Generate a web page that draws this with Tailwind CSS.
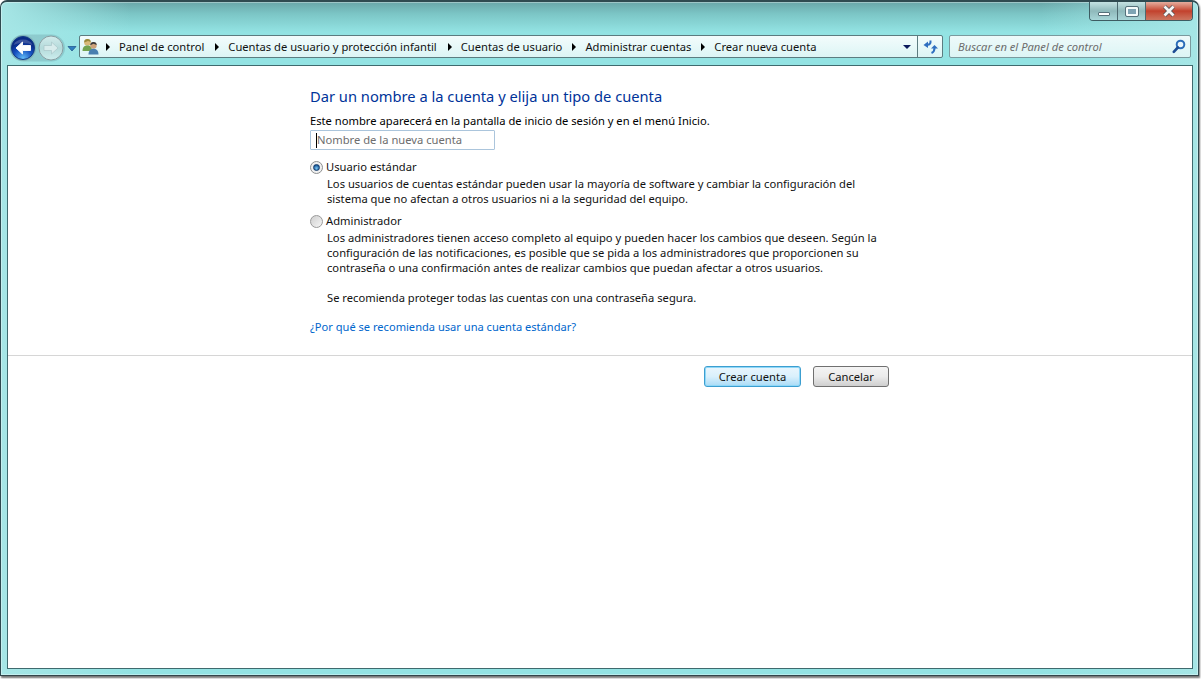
<!DOCTYPE html>
<html lang="es">
<head>
<meta charset="UTF-8" />
<title>Crear nueva cuenta</title>
<script src="https://cdn.jsdelivr.net/npm/@tailwindcss/browser@4"></script>
</head>
<body class="bg-white">
<div class="w-[1201px] h-[679px] overflow-hidden font-['Noto_Sans',sans-serif] text-[11.2px] text-[#1a1a1a]">
  <!-- ventana -->
  <div class="w-[1199px] h-[676px] flex flex-col rounded-t-[7px] border border-t-2 border-[#2f4a50] border-b-[#33454a] bg-[linear-gradient(90deg,#a6e6e6_0px,rgba(166,230,230,0)_130px,rgba(166,230,230,0)_1040px,#a6e6e6_1199px),linear-gradient(180deg,#6aa6a8_0px,#7cc6c6_12px,#93e3e3_30px,#93e3e3_100%)] shadow-[1px_2px_2px_rgba(0,0,0,0.55),inset_0_0_0_1px_rgba(255,255,255,0.35)]">
    <!-- botones de ventana -->
    <div class="flex justify-end pr-[5px] h-[20px] shrink-0">
      <div class="flex h-[19px] rounded-b-[4px] border border-t-0 border-[#3d5c62] overflow-hidden">
        <div class="w-[28px] flex items-center justify-center bg-gradient-to-b from-[#c4e2e2] via-[#8fb9bb] to-[#a8d6d8] border-r border-[#4c6a70]">
          <div class="w-[12px] h-[4px] mt-[6px] bg-white border border-[#56707a] rounded-[1px]"></div>
        </div>
        <div class="w-[28px] flex items-center justify-center bg-gradient-to-b from-[#c4e2e2] via-[#8fb9bb] to-[#a8d6d8] border-r border-[#4c6a70]">
          <div class="w-[12px] h-[9px] border-2 border-[#f4fbfb] bg-[#7fa4b4] outline outline-1 outline-[#56707a] rounded-[1px]"></div>
        </div>
        <div class="w-[46px] flex items-center justify-center bg-gradient-to-b from-[#e3ad9e] via-[#c2412d] to-[#cc7560]">
          <svg width="14" height="12" viewBox="0 0 14 12"><path d="M2.5 1.5 L11.5 10.5 M11.5 1.5 L2.5 10.5" stroke="#4b4f55" stroke-width="4.2"/><path d="M2.5 1.5 L11.5 10.5 M11.5 1.5 L2.5 10.5" stroke="#f6f6f6" stroke-width="2.8"/></svg>
        </div>
      </div>
    </div>
    <!-- barra de direcciones -->
    <div class="flex items-end h-[43px] shrink-0 pl-[9px] pb-[7px]">
      <div class="flex items-center w-[69px] h-[23px] shrink-0">
        <svg width="55" height="30" viewBox="0 0 55 30" class="shrink-0">
          <defs>
            <radialGradient id="azul" cx="50%" cy="95%" r="70%"><stop offset="0" stop-color="#63bdf8"/><stop offset="0.6" stop-color="#1550c0"/><stop offset="1" stop-color="#0a2a86"/></radialGradient>
            <linearGradient id="gris" x1="0" y1="0" x2="0" y2="1"><stop offset="0" stop-color="#d3ecec"/><stop offset="0.5" stop-color="#b4dada"/><stop offset="1" stop-color="#cdeeee"/></linearGradient>
          </defs>
          <rect x="0" y="2.5" width="55" height="27" rx="13.5" fill="#6a9ca2" opacity="0.35"/>
          <circle cx="13" cy="16" r="13" fill="#7aaab0" opacity="0.7"/>
          <circle cx="41" cy="16" r="12" fill="url(#gris)" stroke="#8a9fa3"/>
          <circle cx="13" cy="16" r="11.5" fill="url(#azul)" stroke="#123a86"/>
          <path d="M3.5 13 A10 8 0 0 1 22.5 13 A14 8 0 0 0 3.5 13 Z" fill="#ffffff" opacity="0.2"/>
          <path d="M6 16 L12.5 10 V13.5 H20.5 V18.5 H12.5 V22 Z" fill="#fff" stroke="#fff" stroke-width="0.9" stroke-linejoin="round"/>
          <path d="M48 16 L41.5 10 V13.5 H34 V18.5 H41.5 V22 Z" fill="#d8ecec" stroke="#a9c6c8" stroke-width="0.7"/>
        </svg>
        <svg width="10" height="6" viewBox="0 0 10 6" class="ml-[2px] mt-[4px] shrink-0"><path d="M1 0.5 H9 L5 5 Z" fill="#2f7fc0" stroke="#1c4f86" stroke-width="0.7"/></svg>
      </div>
      <div class="flex items-center w-[864px] h-[23px] shrink-0 rounded-[2px] border border-[#5c7c80] bg-gradient-to-b from-[#f3fcfc] to-[#dcf5f5]">
        <svg width="17" height="17" viewBox="0 0 17 17" class="ml-[2px] shrink-0">
          <circle cx="5.5" cy="4.5" r="3.3" fill="#d9b978"/>
          <path d="M2.2 4.5 A3.3 3.3 0 0 1 8.8 4 L6 3 Z" fill="#9a8a3a"/>
          <path d="M0.5 13 C0.5 8.5 3 7.5 5.5 7.5 C8 7.5 10 8.5 10 13 Z" fill="#72a34f"/>
          <circle cx="11.5" cy="7.5" r="3.2" fill="#cda27a"/>
          <path d="M8.3 7.3 A3.2 3.2 0 0 1 14.7 7 L11.5 5.8 Z" fill="#3a3a3a"/>
          <path d="M6.5 16.5 C6.5 12 9 10.7 11.5 10.7 C14 10.7 16.5 12 16.5 16.5 Z" fill="#4a7fb0"/>
        </svg>
        <div class="flex-1 flex items-center text-[#111] whitespace-nowrap pl-[7px] pt-[1px]">
          <span class="w-0 h-0 border-y-[4px] border-y-transparent border-l-[4px] border-l-black mr-[9px]"></span>
          <span>Panel de control</span>
          <span class="w-0 h-0 border-y-[4px] border-y-transparent border-l-[4px] border-l-black ml-[11px] mr-[9px]"></span>
          <span>Cuentas de usuario y protección infantil</span>
          <span class="w-0 h-0 border-y-[4px] border-y-transparent border-l-[4px] border-l-black ml-[11px] mr-[9px]"></span>
          <span>Cuentas de usuario</span>
          <span class="w-0 h-0 border-y-[4px] border-y-transparent border-l-[4px] border-l-black ml-[10px] mr-[9px]"></span>
          <span>Administrar cuentas</span>
          <span class="w-0 h-0 border-y-[4px] border-y-transparent border-l-[4px] border-l-black ml-[10px] mr-[9px]"></span>
          <span>Crear nueva cuenta</span>
        </div>
        <span class="w-0 h-0 border-x-[4px] border-x-transparent border-t-[4px] border-t-[#0a1a5c] mr-[6px]"></span>
        <div class="w-[25px] h-full flex items-center justify-center border-l border-[#5c7c80]">
          <svg width="15" height="14" viewBox="0 0 15 14">
            <path d="M0.5 5 L5 1.5 V8 Z" fill="#2f6fc0"/>
            <path d="M4.5 4.8 C6.8 4.8 7.8 3 7.5 0.5" fill="none" stroke="#2f6fc0" stroke-width="2"/>
            <path d="M8 8.5 L11.5 5 L15 8.5 Z" fill="#2f6fc0"/>
            <path d="M11.5 8 C11.5 10.5 11 12 8.5 13" fill="none" stroke="#2f6fc0" stroke-width="2"/>
          </svg>
        </div>
      </div>
      <div class="ml-[6px] flex items-center w-[242px] h-[23px] shrink-0 rounded-[2px] border border-[#7a9a9e] bg-gradient-to-b from-[#eefafa] to-[#dcf5f5] pl-[8px] pr-[4px]">
        <span class="flex-1 italic text-[#6d6d6d] whitespace-nowrap pt-[1px]">Buscar en el Panel de control</span>
        <svg width="14" height="15" viewBox="0 0 14 15"><circle cx="8.5" cy="5.5" r="3.8" fill="#eaf6fb" stroke="#2b6cb8" stroke-width="2"/><path d="M5.8 8.5 L1.8 12.8" stroke="#1c4c94" stroke-width="2.6" stroke-linecap="round"/></svg>
      </div>
    </div>
    <!-- contenido -->
    <div class="flex-1 ml-[6px] mr-[5px] mb-[6px] border border-[#3f6a6e] bg-white flex flex-col">
      <div class="pl-[302px] pt-[20px]">
        <h1 class="text-[14.7px] leading-[20px] text-[#003399] font-normal">Dar un nombre a la cuenta y elija un tipo de cuenta</h1>
        <p class="mt-[7px] leading-[16px] text-black">Este nombre aparecerá en la pantalla de inicio de sesión y en el menú Inicio.</p>
        <div class="mt-[1px] w-[185px] h-[20px] flex items-center border border-[#abc5dc] rounded-[1px] pl-[5px] text-[#6d6d6d]">
          <span class="w-px h-[15px] bg-black"></span><span>Nombre de la nueva cuenta</span>
        </div>
        <div class="mt-[9px] flex items-center h-[16px]">
          <span class="w-[13px] h-[13px] rounded-full border border-[#8e9090] bg-[#f0f0f0] flex items-center justify-center"><span class="w-[7px] h-[7px] rounded-full border border-[#123a6a] bg-[radial-gradient(circle_at_50%_65%,#7cc8f4,#1a5a9a_70%)]"></span></span>
          <span class="ml-[3px] text-[#111]">Usuario estándar</span>
        </div>
        <p class="mt-[1px] ml-[17px] leading-[15px] text-[#111]">Los usuarios de cuentas estándar pueden usar la mayoría de software y cambiar la configuración del<br>sistema que no afectan a otros usuarios ni a la seguridad del equipo.</p>
        <div class="mt-[7px] flex items-center h-[16px]">
          <span class="w-[13px] h-[13px] rounded-full border border-[#9a9a9a] bg-gradient-to-br from-[#cfcfcf] to-[#f6f6f6]"></span>
          <span class="ml-[3px] text-[#111]">Administrador</span>
        </div>
        <p class="mt-[1px] ml-[17px] leading-[15px] text-[#111]">Los administradores tienen acceso completo al equipo y pueden hacer los cambios que deseen. Según la<br>configuración de las notificaciones, es posible que se pida a los administradores que proporcionen su<br>contraseña o una confirmación antes de realizar cambios que puedan afectar a otros usuarios.</p>
        <p class="mt-[15px] ml-[17px] leading-[15px] text-[#111]">Se recomienda proteger todas las cuentas con una contraseña segura.</p>
        <a class="block mt-[14px] leading-[16px] text-[11.1px] text-[#0066cc]">¿Por qué se recomienda usar una cuenta estándar?</a>
      </div>
      <div class="mt-[20px] border-t border-[#d6d6d6]"></div>
      <div class="flex pl-[696px] pt-[10px] gap-[12px]">
        <button class="w-[97px] h-[21px] pt-[1px] rounded-[3px] border border-[#3c9ed0] bg-gradient-to-b from-[#eaf6fd] via-[#d9f0fc] to-[#a9dbf6] shadow-[inset_0_0_0_1px_#8fd8f8] text-[#111]">Crear cuenta</button>
        <button class="w-[76px] h-[21px] pt-[1px] rounded-[3px] border border-[#707070] bg-gradient-to-b from-[#f4f4f4] via-[#ebebeb] to-[#cfcfcf] text-[#111]">Cancelar</button>
      </div>
    </div>
  </div>
</div>
</body>
</html>
